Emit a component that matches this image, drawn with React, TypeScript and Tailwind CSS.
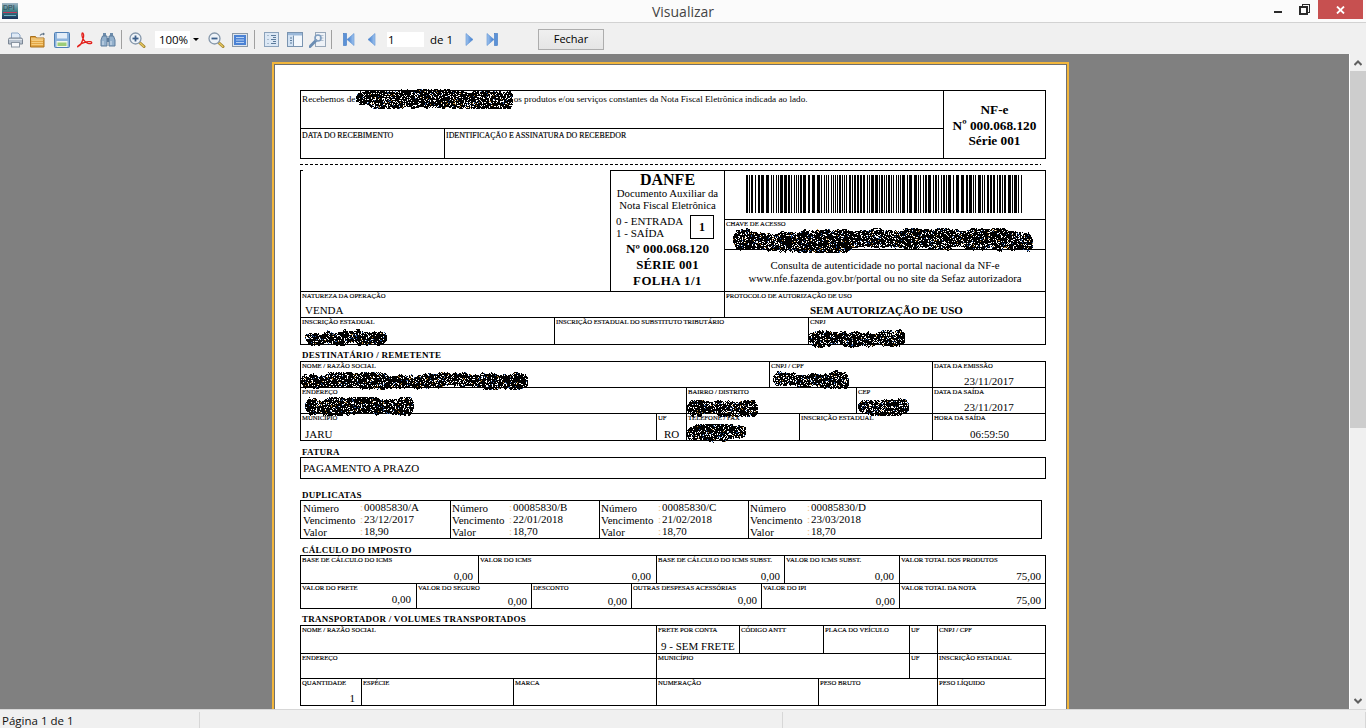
import type { ReactNode } from "react";
import clsx from "clsx";

// Seeded noise so the redaction blobs and barcode stay the same on every render
function rng(seed: number) {
  let s = seed;
  return () => {
    s = (s * 1664525 + 1013904223) >>> 0;
    return s / 4294967296;
  };
}

function Scribble({ w, h, seed, className }: { w: number; h: number; seed: number; className: string }) {
  const r = rng(seed);
  let ink = "";
  let blue = "";
  let orange = "";
  let c = h / 2;
  let half = h * 0.4;
  for (let x = 0; x < w; x++) {
    c = Math.min(h * 0.6, Math.max(h * 0.4, c + (r() - 0.5) * 1.6));
    half = Math.min(h * 0.5, Math.max(h * 0.32, half + (r() - 0.5) * 2));
    const edge = Math.min(1, Math.min(x, w - x) / 6 + 0.4);
    const top = Math.round(c - half * edge);
    const bottom = Math.round(c + half * edge);
    for (let y = top; y < bottom; y++) {
      const p = r();
      const cell = `M${x} ${y}h1v1h-1z`;
      if (p < 0.78) ink += cell;
      else if (p < 0.81) blue += cell;
      else if (p < 0.83) orange += cell;
    }
  }
  return (
    <svg
      width={w}
      height={h}
      viewBox={`0 0 ${w} ${h}`}
      shapeRendering="crispEdges"
      className={clsx("absolute", className)}
    >
      <path d={ink} fill="#000" />
      <path d={blue} fill="#2f5fa8" />
      <path d={orange} fill="#b9822f" />
    </svg>
  );
}

function Barcode() {
  const r = rng(68120);
  const bars: { x: number; w: number }[] = [];
  let x = 0;
  while (x < 276) {
    const bw = r() < 0.55 ? 1 : r() < 0.6 ? 2 : 3;
    if (x + bw > 276) break;
    bars.push({ x, w: bw });
    x += bw + (r() < 0.65 ? 1 : 2);
  }
  return (
    <svg width="276" height="38" viewBox="0 0 276 38" shapeRendering="crispEdges">
      {bars.map((b) => (
        <rect key={b.x} x={b.x} y="0" width={b.w} height="38" fill="#000" />
      ))}
    </svg>
  );
}

/* ---------- toolbar icons ---------- */

function PrintIcon() {
  return (
    <svg width="17" height="16" viewBox="0 0 17 16">
      <path d="M4.500 1h6.500l2 2v4h-8.500z" fill="#dfeaf6" stroke="#8ba6c6" />
      <path d="M1.500 7.500q0-1.500 1.500-1.500h11q1.500 0 1.500 1.500v4.500h-14z" fill="#b9c3cf" stroke="#7b8694" />
      <path d="M2 7.500h13" stroke="#e4e9ee" />
      <rect x="4.500" y="10.500" width="8" height="4.500" fill="#f6f7f9" stroke="#8a95a2" />
    </svg>
  );
}

function OpenIcon() {
  return (
    <svg width="17" height="16" viewBox="0 0 17 16">
      <path d="M10 3.500q1.500-2 4-1.500" fill="none" stroke="#5f7488" strokeWidth="1.200" />
      <path d="M13 .5l2 1.500-2 1.500z" fill="#5f7488" />
      <path d="M.5 4.500h5l1 1.500h7.500v9h-13.500z" fill="#e3a644" stroke="#a8701d" />
      <path d="M1.500 8.500h11.500M1.500 10.500h11.500M1.500 12.500h11.500" stroke="#f5cd7f" />
      <path d="M1 7h12.500" stroke="#f9dfa6" />
    </svg>
  );
}

function SaveIcon() {
  return (
    <svg width="16" height="16" viewBox="0 0 16 16">
      <path d="M.5 1.500q0-1 1-1h13q1 0 1 1v13q0 1-1 1h-13q-1 0-1-1z" fill="#8db3dc" stroke="#4f7fb5" />
      <rect x="3" y="1" width="10" height="5.500" fill="#e3edf8" />
      <rect x="2.500" y="9" width="11" height="6" fill="#f2f7ec" />
      <rect x="3.500" y="10.500" width="9" height="3.500" fill="#9ccc78" />
    </svg>
  );
}

function PdfIcon() {
  return (
    <svg width="16" height="16" viewBox="0 0 16 16" fill="none">
      <path
        d="M1 14.500c2.500-1 4.500-5 5.500-9.500.4-2-.2-4-1-4s-.8 2.500 0 4.500c1.200 3 3.200 5 5.500 5.800 2 .6 3.800.4 3.800-.6s-2.500-1.400-5.500-.8c-3 .6-6 2-8 3.800-1 1-.8 1.500-.3.800z"
        stroke="#e3201b"
        strokeWidth="1.300"
      />
    </svg>
  );
}

function FindIcon() {
  return (
    <svg width="16" height="15" viewBox="0 0 16 15">
      <rect x="3" y="1" width="3" height="4" fill="#6d8cab" />
      <rect x="10" y="1" width="3" height="4" fill="#6d8cab" />
      <path d="M2.500 4h4.500v10h-6v-6z" fill="#93b0cc" stroke="#5d7c9c" />
      <path d="M9 4h4.500l1.500 4v6h-6z" fill="#93b0cc" stroke="#5d7c9c" />
      <rect x="7" y="6" width="2" height="4" fill="#5d7c9c" />
      <path d="M3 9v4M11 9v4" stroke="#d5e2ef" />
    </svg>
  );
}

function LensIcon({ plus }: { plus?: boolean }) {
  return (
    <svg width="17" height="16" viewBox="0 0 17 16">
      <path d="M10.500 10.500l4.500 4" stroke="#a08430" strokeWidth="3" strokeLinecap="round" />
      <path d="M10.800 10.800l4 3.600" stroke="#e6c860" strokeWidth="1.400" strokeLinecap="round" />
      <circle cx="6.500" cy="6.500" r="5.500" fill="#eef3f8" stroke="#8698ab" strokeWidth="1.300" />
      <path d="M3.500 6.500h6" stroke="#3c5f8a" strokeWidth="1.800" />
      {plus && <path d="M6.500 3.500v6" stroke="#3c5f8a" strokeWidth="1.800" />}
    </svg>
  );
}

function FitIcon() {
  return (
    <svg width="16" height="14" viewBox="0 0 16 14">
      <rect x=".5" y=".5" width="15" height="13" fill="#dfe6ee" stroke="#8a98a7" />
      <rect x="2" y="2" width="12" height="10" fill="#4b82d4" />
      <path d="M4 4.500h8M4 7h8M4 9.500h8" stroke="#b7d1f4" />
    </svg>
  );
}

function OutlineIcon() {
  return (
    <svg width="15" height="15" viewBox="0 0 15 15">
      <rect x=".5" y=".5" width="14" height="14" fill="#dce8f5" stroke="#8ba2bb" />
      <path d="M7 3.500h5M9 5.500h3M7 7.500h5M9 9.500h3M7 11.500h5" stroke="#5d7c9c" />
      <path d="M3 3.500h2M3 7.500h2M3 11.500h2" stroke="#a9bccf" />
    </svg>
  );
}

function PanelIcon() {
  return (
    <svg width="16" height="15" viewBox="0 0 16 15">
      <rect x=".5" y=".5" width="15" height="14" fill="#f4f8fc" stroke="#7a94b0" />
      <rect x="1" y="1" width="14" height="2.500" fill="#9bb9da" />
      <rect x="1" y="3.500" width="5.500" height="10.500" fill="#d2e2f3" />
      <path d="M6.500 3.500v11" stroke="#7a94b0" />
      <path d="M3 6h2M3 8.500h2M3 11h2" stroke="#5d7c9c" />
    </svg>
  );
}

function SetupIcon() {
  return (
    <svg width="17" height="16" viewBox="0 0 17 16">
      <rect x="6.500" y=".5" width="10" height="14" fill="#eef2f7" stroke="#98a7b8" />
      <path d="M8.500 3.500h6M10.500 6h4M11 8.500h3.500" stroke="#b4c1cf" />
      <path d="M1 14.500l6-6" stroke="#6b8db3" strokeWidth="3" strokeLinecap="round" />
      <circle cx="9" cy="6" r="3" fill="none" stroke="#7f9dbf" strokeWidth="1.600" />
    </svg>
  );
}

// first and last carry the extra bar next to the triangle
function NavIcon({ dir, bar }: { dir: "left" | "right"; bar?: boolean }) {
  const id = `nav-${dir}-${bar ? "b" : "n"}`;
  const flip = dir === "right" ? "translate(12 0) scale(-1 1)" : undefined;
  return (
    <svg width="12" height="13" viewBox="0 0 12 13">
      <defs>
        <linearGradient id={id} x1="0" x2="1" y1="0" y2="0">
          <stop offset="0" stopColor="#3a78cc" />
          <stop offset="1" stopColor="#a3c6ef" />
        </linearGradient>
      </defs>
      <g transform={flip}>
        {bar && <rect x=".5" y=".5" width="3" height="12" fill="#5b92d8" stroke="#3f77c0" strokeWidth=".6" />}
        <path d={bar ? "M11 .5v12l-7-6z" : "M9 .5v12l-7-6z"} fill={`url(#${id})`} stroke="#5b90d4" strokeWidth=".6" />
      </g>
    </svg>
  );
}

function Tool({ children }: { children: ReactNode }) {
  return <div className="flex h-[23px] w-[23px] items-center justify-center">{children}</div>;
}

function Sep({ className }: { className: string }) {
  return <div className={clsx("h-[19px] w-px bg-[#a0a0a0]", className)} />;
}

function Chevron({ up }: { up?: boolean }) {
  return (
    <svg width="8" height="6" viewBox="0 0 8 6" fill="none">
      <path d={up ? "M.5 5L4 1.500 7.500 5" : "M.5 1L4 4.500 7.500 1"} stroke="#5f5f5f" strokeWidth="2" />
    </svg>
  );
}

/* ---------- document pieces ---------- */

function Label({ children, big }: { children: ReactNode; big?: boolean }) {
  return (
    <div
      className={clsx(
        "whitespace-nowrap leading-[8px] [-webkit-text-stroke:0.15px_#000]",
        big ? "text-[7.900px]" : "text-[6.700px]",
      )}
    >
      {children}
    </div>
  );
}

function Cell({
  className,
  label,
  value,
  valueClass,
  big,
}: {
  className?: string;
  label: string;
  value?: string;
  valueClass?: string;
  big?: boolean;
}) {
  return (
    <div className={clsx("flex flex-col justify-between overflow-hidden pl-px", className)}>
      <Label big={big}>{label}</Label>
      {value && <div className={clsx("whitespace-nowrap text-[11px] leading-[12px]", valueClass)}>{value}</div>}
    </div>
  );
}

function Row({ className, children }: { className: string; children: ReactNode }) {
  return <div className={clsx("flex border-t border-black", className)}>{children}</div>;
}

function Heading({ className, children }: { className: string; children: ReactNode }) {
  return (
    <div className={clsx("flex items-end pl-[2px] text-[9px] font-bold leading-[9px] tracking-[0.25px]", className)}>
      {children}
    </div>
  );
}

function Duplicata({ className, numero, venc, valor }: { className: string; numero: string; venc: string; valor: string }) {
  return (
    <div className={clsx("flex text-[11px] leading-[12px]", className)}>
      <div className="w-[58px] shrink-0 pl-px pt-px">
        <div>Número</div>
        <div>Vencimento</div>
        <div>Valor</div>
      </div>
      <div className="w-[4px] shrink-0 text-[#f0c48c]">
        <div>:</div>
        <div>:</div>
        <div>:</div>
      </div>
      <div className="flex-1">
        <div>{numero}</div>
        <div>{venc}</div>
        <div>{valor}</div>
      </div>
    </div>
  );
}

function NfeDocument() {
  return (
    <div className="relative bg-white pb-[8px] pl-[25px] pt-[25px] text-black [font-family:'Liberation_Serif',serif]">
      {/* canhoto */}
      <div className="flex h-[69px] w-[746px] border border-black">
        <div className="flex-1">
          <div className="h-[37px] whitespace-nowrap pl-px pt-[3px] text-[9.200px] leading-[10px]">
            Recebemos de <span className="inline-block w-[156px]" />
            os produtos e/ou serviços constantes da Nota Fiscal Eletrônica indicada ao lado.
          </div>
          <div className="flex h-[30px] border-t border-black">
            <Cell big className="w-[143px] pt-[3px]" label="DATA DO RECEBIMENTO" />
            <Cell big className="flex-1 border-l border-black pt-[3px]" label="IDENTIFICAÇÃO E ASSINATURA DO RECEBEDOR" />
          </div>
        </div>
        <div className="flex w-[102px] flex-col items-center justify-center border-l border-black pt-[2px] text-[13.300px] font-bold leading-[15.500px]">
          <div>NF-e</div>
          <div>Nº 000.068.120</div>
          <div>Série 001</div>
        </div>
      </div>

      <div className="mt-[5px] h-px w-[741px] bg-[repeating-linear-gradient(90deg,#000_0_3px,transparent_3px_5px)]" />

      {/* danfe */}
      <div className="mt-[5px] w-[746px] border-x border-b border-black">
        <div className="flex h-[121px]">
          <div className="relative w-[309px]">
            <div className="absolute -left-px top-0 h-px w-[3px] bg-black" />
          </div>
          <div className="flex w-[114px] flex-col items-center border-l border-t border-black pt-[2px]">
            <div className="text-[16px] font-bold leading-[14px]">DANFE</div>
            <div className="text-center text-[10.800px] leading-[12px]">
              Documento Auxiliar da
              <br />
              Nota Fiscal Eletrônica
            </div>
            <div className="mt-[4px] flex w-full items-start pl-[5px]">
              <div className="w-[74px] text-[11px] leading-[12px]">
                0 - ENTRADA
                <br />1 - SAÍDA
              </div>
              <div className="flex h-[24px] w-[24px] items-center justify-center border border-black text-[12px] font-bold">
                1
              </div>
            </div>
            <div className="mt-[2px] text-center text-[13.200px] font-bold leading-[15.500px]">
              Nº 000.068.120
              <br />
              <span className="text-[12.800px] tracking-[0.2px]">SÉRIE 001</span>
              <br />
              <span className="text-[12.800px] tracking-[0.5px]">FOLHA 1/1</span>
            </div>
          </div>
          <div className="flex flex-1 flex-col border-l border-t border-black">
            <div className="h-[48px] pl-[21px] pt-[4px]">
              <Barcode />
            </div>
            <div className="h-[30px] border-t border-black pl-px">
              <Label>CHAVE DE ACESSO</Label>
            </div>
            <div className="flex-1 border-t border-black pt-[9px] text-center text-[10.750px] leading-[13px]">
              Consulta de autenticidade no portal nacional da NF-e
              <br />
              www.nfe.fazenda.gov.br/portal ou no site da Sefaz autorizadora
            </div>
          </div>
        </div>
        <Row className="h-[26px]">
          <Cell className="w-[423px]" label="NATUREZA DA OPERAÇÃO" value="VENDA" valueClass="pb-px pl-[3px]" />
          <Cell
            className="flex-1 border-l border-black"
            label="PROTOCOLO DE AUTORIZAÇÃO DE USO"
            value="SEM AUTORIZAÇÃO DE USO"
            valueClass="pb-px pl-[84px] text-[10.600px] font-bold"
          />
        </Row>
        <Row className="h-[27px]">
          <Cell className="w-[253px]" label="INSCRIÇÃO ESTADUAL" />
          <Cell className="w-[254px] border-l border-black" label="INSCRIÇÃO ESTADUAL DO SUBSTITUTO TRIBUTÁRIO" />
          <Cell className="flex-1 border-l border-black" label="CNPJ" />
        </Row>
      </div>

      <Heading className="h-[16px] pb-px">DESTINATÁRIO / REMETENTE</Heading>
      <div className="w-[746px] border-x border-b border-black">
        <Row className="h-[26px]">
          <Cell className="w-[468px]" label="NOME / RAZÃO SOCIAL" />
          <Cell className="w-[163px] border-l border-black" label="CNPJ / CPF" />
          <Cell className="flex-1 border-l border-black" label="DATA DA EMISSÃO" value="23/11/2017" valueClass="pl-[30px]" />
        </Row>
        <Row className="h-[26px]">
          <Cell className="w-[385px]" label="ENDEREÇO" />
          <Cell className="w-[170px] border-l border-black" label="BAIRRO / DISTRITO" />
          <Cell className="w-[76px] border-l border-black" label="CEP" />
          <Cell className="flex-1 border-l border-black" label="DATA DA SAÍDA" value="23/11/2017" valueClass="pl-[30px]" />
        </Row>
        <Row className="h-[27px]">
          <Cell className="w-[355px]" label="MUNICÍPIO" value="JARU" valueClass="pl-[3px]" />
          <Cell className="w-[30px] border-l border-black" label="UF" value="RO" valueClass="pl-[6px]" />
          <Cell className="w-[113px] border-l border-black" label="TELEFONE / FAX" />
          <Cell className="w-[133px] border-l border-black" label="INSCRIÇÃO ESTADUAL" />
          <Cell className="flex-1 border-l border-black" label="HORA DA SAÍDA" value="06:59:50" valueClass="pl-[36px] text-[10.300px]" />
        </Row>
      </div>

      <Heading className="h-[16px]">FATURA</Heading>
      <div className="w-[746px] border-x border-b border-black">
        <Row className="h-[21px] items-center pl-[2px] pt-px text-[11px]">PAGAMENTO A PRAZO</Row>
      </div>

      <Heading className="h-[21px]">DUPLICATAS</Heading>
      <div className="w-[742px] border-x border-b border-black">
        <Row className="h-[38px]">
          <Duplicata className="w-[149px] pl-px" numero="00085830/A" venc="23/12/2017" valor="18,90" />
          <Duplicata className="w-[149px] border-l border-black" numero="00085830/B" venc="22/01/2018" valor="18,70" />
          <Duplicata className="w-[149px] border-l border-black" numero="00085830/C" venc="21/02/2018" valor="18,70" />
          <Duplicata className="flex-1 border-l border-black" numero="00085830/D" venc="23/03/2018" valor="18,70" />
        </Row>
      </div>

      <Heading className="h-[16px]">CÁLCULO DO IMPOSTO</Heading>
      <div className="w-[746px] border-x border-b border-black">
        <Row className="h-[28px]">
          <Cell className="w-[177px]" label="BASE DE CÁLCULO DO ICMS" value="0,00" valueClass="pb-px pr-[5px] text-right" />
          <Cell className="w-[178px] border-l border-black" label="VALOR DO ICMS" value="0,00" valueClass="pb-px pr-[5px] text-right" />
          <Cell className="w-[128px] border-l border-black" label="BASE DE CÁLCULO DO ICMS SUBST." value="0,00" valueClass="pb-px pr-[4px] text-right" />
          <Cell className="w-[115px] border-l border-black" label="VALOR DO ICMS SUBST." value="0,00" valueClass="pb-px pr-[5px] text-right" />
          <Cell className="flex-1 border-l border-black" label="VALOR TOTAL DOS PRODUTOS" value="75,00" valueClass="pb-px pr-[4px] text-right" />
        </Row>
        <Row className="h-[25px]">
          <Cell className="w-[115px]" label="VALOR DO FRETE" value="0,00" valueClass="pb-[3px] pr-[5px] text-right" />
          <Cell className="w-[115px] border-l border-black" label="VALOR DO SEGURO" value="0,00" valueClass="pb-px pr-[4px] text-right" />
          <Cell className="w-[100px] border-l border-black" label="DESCONTO" value="0,00" valueClass="pb-px pr-[4px] text-right" />
          <Cell className="w-[130px] border-l border-black" label="OUTRAS DESPESAS ACESSÓRIAS" value="0,00" valueClass="pb-[2px] pr-[4px] text-right" />
          <Cell className="w-[138px] border-l border-black" label="VALOR DO IPI" value="0,00" valueClass="pb-px pr-[4px] text-right" />
          <Cell className="flex-1 border-l border-black" label="VALOR TOTAL DA NOTA" value="75,00" valueClass="pb-[2px] pr-[4px] text-right" />
        </Row>
      </div>

      <Heading className="h-[16px] pb-px">TRANSPORTADOR / VOLUMES TRANSPORTADOS</Heading>
      <div className="w-[746px] border-x border-b border-black">
        <Row className="h-[28px]">
          <Cell className="w-[355px]" label="NOME / RAZÃO SOCIAL" />
          <Cell className="w-[83px] border-l border-black" label="FRETE POR CONTA" value="9 - SEM FRETE" valueClass="pb-px pl-[3px]" />
          <Cell className="w-[84px] border-l border-black" label="CÓDIGO ANTT" />
          <Cell className="w-[86px] border-l border-black" label="PLACA DO VEÍCULO" />
          <Cell className="w-[28px] border-l border-black" label="UF" />
          <Cell className="flex-1 border-l border-black" label="CNPJ / CPF" />
        </Row>
        <Row className="h-[25px]">
          <Cell className="w-[355px]" label="ENDEREÇO" />
          <Cell className="w-[253px] border-l border-black" label="MUNICÍPIO" />
          <Cell className="w-[28px] border-l border-black" label="UF" />
          <Cell className="flex-1 border-l border-black" label="INSCRIÇÃO ESTADUAL" />
        </Row>
        <Row className="h-[27px]">
          <Cell className="w-[60px]" label="QUANTIDADE" value="1" valueClass="pb-px pr-[6px] text-right" />
          <Cell className="w-[152px] border-l border-black" label="ESPÉCIE" />
          <Cell className="w-[143px] border-l border-black" label="MARCA" />
          <Cell className="w-[162px] border-l border-black" label="NUMERAÇÃO" />
          <Cell className="w-[119px] border-l border-black" label="PESO BRUTO" />
          <Cell className="flex-1 border-l border-black" label="PESO LÍQUIDO" />
        </Row>
      </div>

      {/* dados tarjados por cima do documento */}
      <Scribble w={157} h={20} seed={11} className="left-[81px] top-[24px]" />
      <Scribble w={300} h={25} seed={23} className="left-[458px] top-[163px]" />
      <Scribble w={82} h={17} seed={31} className="left-[30px] top-[264px]" />
      <Scribble w={97} h={19} seed={47} className="left-[533px] top-[264px]" />
      <Scribble w={227} h={18} seed={59} className="left-[26px] top-[307px]" />
      <Scribble w={76} h={19} seed={61} className="left-[498px] top-[305px]" />
      <Scribble w={109} h={19} seed={73} className="left-[30px] top-[332px]" />
      <Scribble w={71} h={17} seed={83} className="left-[412px] top-[335px]" />
      <Scribble w={51} h={18} seed={97} className="left-[583px] top-[333px]" />
      <Scribble w={60} h={19} seed={101} className="left-[411px] top-[359px]" />
    </div>
  );
}

export default function App() {
  return (
    <div className="flex h-[728px] w-[1366px] flex-col overflow-hidden bg-[#f0f0f0] text-black [font-family:'Open_Sans','Noto_Sans',sans-serif]">
      {/* barra de título */}
      <div className="grid h-[23px] shrink-0 grid-cols-[1fr_auto_1fr] border-b border-[#d2d2d2] bg-[#fbfbfb]">
        <div className="pl-[2px] pt-[3px]">
          <svg width="16" height="16" viewBox="0 0 16 16">
            <defs>
              <linearGradient id="app-logo" x1="0" x2="0" y1="0" y2="1">
                <stop offset="0" stopColor="#9fb4c4" />
                <stop offset=".5" stopColor="#3d7f86" />
                <stop offset="1" stopColor="#18305a" />
              </linearGradient>
            </defs>
            <rect width="16" height="16" fill="url(#app-logo)" />
            <text x="1" y="7" fontSize="7" fontFamily="Liberation Sans, sans-serif" fill="#26424f">
              DPI
            </text>
            <rect x="1" y="9" width="14" height="1" fill="#c0395a" />
            <rect x="2" y="12" width="12" height="1" fill="#6fb0c0" />
          </svg>
        </div>
        <div className="text-[14px] leading-[23px] text-[#444]">Visualizar</div>
        <div className="flex justify-end pr-[3px]">
          <div className="flex h-[19px] w-[26px] items-center justify-center">
            <div className="mt-[4px] h-[2px] w-[8px] bg-[#2a2a2a]" />
          </div>
          <div className="flex h-[19px] w-[27px] items-center justify-center">
            <svg width="11" height="11" viewBox="0 0 11 11" fill="none" shapeRendering="crispEdges">
              <path d="M3 2.500V.5h7.500v7.500H8.500" stroke="#2a2a2a" />
              <rect x="1" y="3" width="7" height="7" stroke="#2a2a2a" strokeWidth="1.500" />
            </svg>
          </div>
          <div className="flex h-[19px] w-[45px] items-center justify-center bg-[#c75050]">
            <svg width="9" height="8" viewBox="0 0 9 8" fill="none">
              <path d="M1 .5l7 7M8 .5l-7 7" stroke="#fff" strokeWidth="1.800" />
            </svg>
          </div>
        </div>
      </div>

      {/* barra de ferramentas */}
      <div className="flex h-[31px] shrink-0 items-center pl-[4px] pt-[2px]">
        <Tool><PrintIcon /></Tool>
        <Tool><OpenIcon /></Tool>
        <Tool><SaveIcon /></Tool>
        <Tool><PdfIcon /></Tool>
        <Tool><FindIcon /></Tool>
        <Sep className="ml-[2px]" />
        <div className="ml-[4px]"><Tool><LensIcon plus /></Tool></div>
        <div className="ml-[6px] flex h-[17px] w-[47px] items-center bg-white text-[11.500px]">
          <div className="w-[35px] pl-[2px] text-center leading-[17px]">100%</div>
          <div className="flex h-full flex-1 items-center justify-center bg-[#f0f0f0]">
            <div className="h-0 w-0 border-x-[3px] border-t-[3px] border-x-transparent border-t-black" />
          </div>
        </div>
        <div className="ml-[3px]"><Tool><LensIcon /></Tool></div>
        <Tool><FitIcon /></Tool>
        <Sep className="ml-[3px]" />
        <div className="ml-[5px]"><Tool><OutlineIcon /></Tool></div>
        <Tool><PanelIcon /></Tool>
        <Tool><SetupIcon /></Tool>
        <Sep className="ml-[2px]" />
        <div className="ml-[5px]"><Tool><NavIcon dir="left" bar /></Tool></div>
        <Tool><NavIcon dir="left" /></Tool>
        <div className="ml-[4px] h-[15px] w-[37px] bg-white pl-[1px] text-[11.500px] leading-[15px]">1</div>
        <div className="ml-[6px] w-[24px] whitespace-nowrap text-[11.500px]">de 1</div>
        <div className="ml-[3px]"><Tool><NavIcon dir="right" /></Tool></div>
        <Tool><NavIcon dir="right" bar /></Tool>
        <button
          type="button"
          className="ml-[35px] h-[21px] w-[66px] border border-[#adadad] bg-gradient-to-b from-[#f0f0f0] to-[#e5e5e5] pb-[2px] text-[11px] leading-[16px] text-black"
        >
          Fechar
        </button>
      </div>

      {/* área do relatório */}
      <div className="flex h-[655px] shrink-0">
        <div className="flex-1 overflow-hidden bg-[#808080]">
          <div className="ml-[272px] mt-[8px] w-[797px] border-2 border-[#f2b63c]">
            <div className="border border-[#6f6f6f]">
              <NfeDocument />
            </div>
          </div>
        </div>
        <div className="flex w-[17px] flex-col border-l border-white bg-[#f0f0f0]">
          <div className="flex h-[17px] items-center justify-center">
            <Chevron up />
          </div>
          <div className="h-[357px] bg-[#cdcdcd]" />
          <div className="flex-1" />
          <div className="flex h-[17px] items-center justify-center">
            <Chevron />
          </div>
        </div>
      </div>

      {/* barra de status */}
      <div className="flex h-[19px] flex-1 border-t border-[#d7d7d7] pt-[2px] text-[11.500px] leading-[17px] text-[#111]">
        <div className="w-[200px] border-r border-[#d7d7d7] pl-[2px]">Página 1 de 1</div>
        <div className="w-[583px] border-r border-[#d7d7d7]" />
        <div className="flex-1 border-r border-[#d7d7d7]" />
      </div>
    </div>
  );
}
